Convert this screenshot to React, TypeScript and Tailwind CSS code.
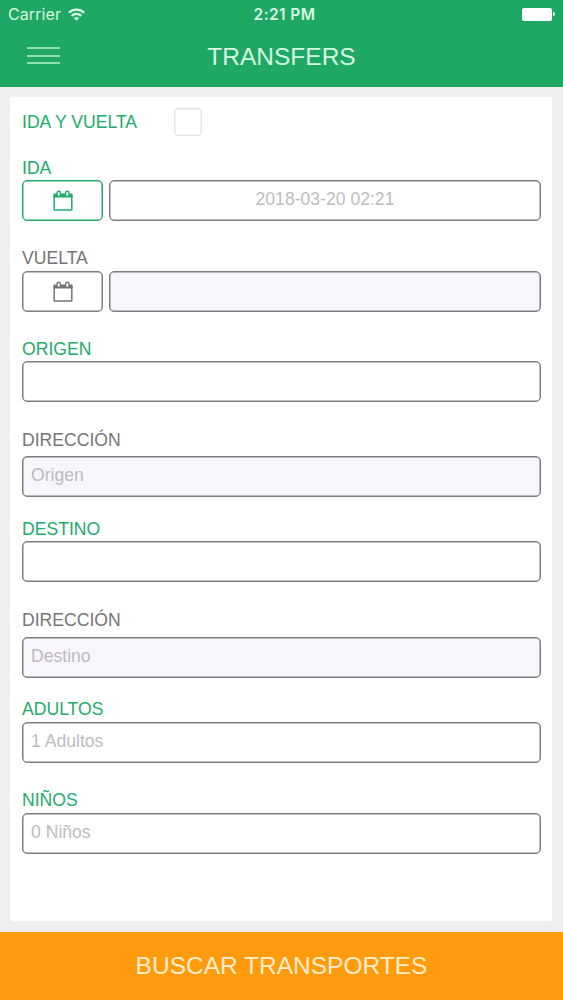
import type { ReactNode } from "react";
import { clsx } from "clsx";

function CalendarIcon() {
  return (
    <svg width="20" height="22" viewBox="0 0 20 22" fill="none" stroke="currentColor">
      <path d="M.5 3.500h19v4H.5z" fill="currentColor" stroke="none" />
      <path d="M1.200 5v15h17.600V5" strokeWidth="1.500" strokeLinejoin="round" />
      <rect x="4" y="1.200" width="3.400" height="5.200" rx="1.700" fill="#fff" strokeWidth="1.400" />
      <rect x="12.600" y="1.200" width="3.400" height="5.200" rx="1.700" fill="#fff" strokeWidth="1.400" />
    </svg>
  );
}

function WifiIcon() {
  return (
    <svg width="17" height="13" viewBox="0 0 17 13" fill="none" stroke="currentColor" strokeWidth="2.200">
      <path d="M.8 4.700C5.100.6 11.900.6 16.200 4.700" />
      <path d="M3.600 7.900c2.800-2.600 7-2.600 9.800 0" />
      <path d="M8.500 12.800 5.700 10c1.600-1.500 4-1.500 5.600 0z" fill="currentColor" stroke="none" />
    </svg>
  );
}

function StatusBar() {
  return (
    <div className="grid h-7 grid-cols-3 items-center px-2 text-[#d5f8e1]">
      <div className="flex items-center gap-[7px] font-['Inter',sans-serif] text-[16px] tracking-[0.1px]">
        <span>Carrier</span>
        <WifiIcon />
      </div>
      <span className="pt-px pl-[6px] text-center font-['Inter',sans-serif] text-[15.5px] font-semibold tracking-[0.4px]">
        2:21 PM
      </span>
      <div className="flex items-center justify-end gap-px text-white">
        <span className="h-[13px] w-[30px] rounded-[2px] bg-white" />
        <span className="h-1 w-[2px] rounded-r bg-white" />
      </div>
    </div>
  );
}

function Label({ active, children }: { active?: boolean; children: ReactNode }) {
  return (
    <div className={clsx("h-5 text-[17.6px] leading-5", active ? "text-[#23ab6c]" : "text-[#777477]")}>
      {children}
    </div>
  );
}

function Field({ value, disabled, center }: { value?: string; disabled?: boolean; center?: boolean }) {
  return (
    <div
      className={clsx(
        "flex h-[41px] w-full items-center rounded-[5px] border border-[#807d80] px-2 pb-[2px] text-[17.6px] text-[#bdbbbe] shadow-[inset_0_0_0_0.5px_#807d80]",
        disabled && "bg-[#f8f6fa]",
        center && "justify-center"
      )}
    >
      {value}
    </div>
  );
}

function DateRow({ active, value, disabled }: { active?: boolean; value?: string; disabled?: boolean }) {
  return (
    <div className="flex gap-[6px]">
      <button
        className={clsx(
          "flex h-[41px] w-[81px] shrink-0 items-center justify-center rounded-[5px] border",
          active
            ? "border-[#23ab6c] text-[#23ab6c] shadow-[inset_0_0_0_0.5px_#23ab6c]"
            : "border-[#807d80] text-[#777477] shadow-[inset_0_0_0_0.5px_#807d80]"
        )}
      >
        <CalendarIcon />
      </button>
      <Field value={value} disabled={disabled} center />
    </div>
  );
}

export default function App() {
  return (
    <div className="flex h-[1000px] w-[563px] flex-col bg-[#f0efee] font-['Liberation_Sans',Arial,sans-serif]">
      <header className="h-[87px] bg-[#1ea863]">
        <StatusBar />
        <div className="grid h-[58px] grid-cols-[27px_1fr_27px] items-center">
          <button className="mb-[3px] ml-[27px] flex w-[33px] flex-col gap-[5.5px]">
            <span className="h-[2px] w-full bg-[#8fdfb2]" />
            <span className="h-[2px] w-full bg-[#8fdfb2]" />
            <span className="h-[2px] w-full bg-[#8fdfb2]" />
          </button>
          <h1 className="text-center text-[24.5px] leading-7 text-[#d5f8e1]">TRANSFERS</h1>
        </div>
      </header>

      <main className="mr-[11px] ml-[10px] mt-[10px] h-[824px] rounded-[2px] bg-white pr-[11px] pl-3">
        <div className="flex h-[61px] items-start pt-[11px]">
          <div className="w-[152px] pt-1">
            <Label active>IDA Y VUELTA</Label>
          </div>
          <span className="size-7 rounded-[4px] border border-[#e6e4e6] shadow-[inset_0_0_0_0.5px_#e6e4e6]" />
        </div>

        <div className="flex flex-col gap-[2px]">
          <Label active>IDA</Label>
          <DateRow active value="2018-03-20 02:21" />
        </div>
        <div className="mt-[27px] flex flex-col gap-[3px]">
          <Label>VUELTA</Label>
          <DateRow disabled />
        </div>
        <div className="mt-[27px] flex flex-col gap-[2px]">
          <Label active>ORIGEN</Label>
          <Field />
        </div>
        <div className="mt-[28px] flex flex-col gap-[6px]">
          <Label>DIRECCIÓN</Label>
          <Field value="Origen" disabled />
        </div>
        <div className="mt-[22px] flex flex-col gap-[2px]">
          <Label active>DESTINO</Label>
          <Field />
        </div>
        <div className="mt-[28px] flex flex-col gap-[7px]">
          <Label>DIRECCIÓN</Label>
          <Field value="Destino" disabled />
        </div>
        <div className="mt-[21px] flex flex-col gap-[3px]">
          <Label active>ADULTOS</Label>
          <Field value="1 Adultos" />
        </div>
        <div className="mt-[27px] flex flex-col gap-[3px]">
          <Label active>NIÑOS</Label>
          <Field value="0 Niños" />
        </div>
      </main>

      <button className="mt-auto h-[68px] bg-[#ff9b0c] text-[24.5px] text-[#ffeecb]">
        BUSCAR TRANSPORTES
      </button>
    </div>
  );
}
